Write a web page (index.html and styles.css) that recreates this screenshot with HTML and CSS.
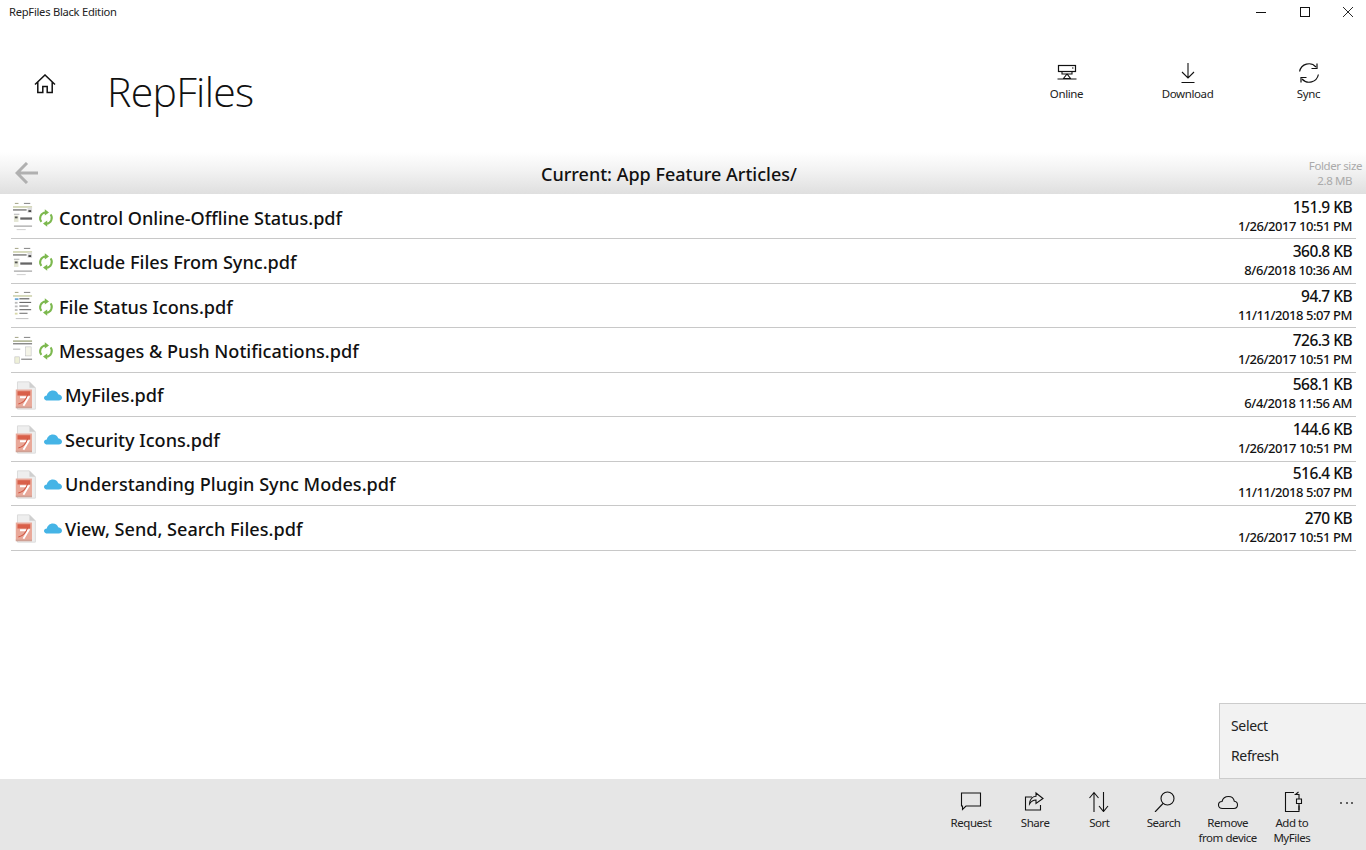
FILE: index.html
```html
<!DOCTYPE html>
<html lang="en">
<head>
<meta charset="utf-8">
<title>RepFiles Black Edition</title>
<link rel="stylesheet" href="styles.css">
</head>
<body>
<svg class="defs" width="0" height="0">
  <symbol id="doc" viewBox="0 0 24 32">
    <rect x="3" y="1" width="4" height="1" fill="#9a9a7a"/><rect x="13" y="1" width="7" height="1" fill="#777"/>
    <rect x="1" y="5" width="21" height="1" fill="#a8b070"/><rect x="1" y="8" width="15" height="1.5" fill="#777"/>
    <rect x="17" y="6" width="5" height="6" fill="#ddd"/><rect x="18" y="9" width="3" height="2" fill="#444"/>
    <rect x="2" y="13" width="6" height="1" fill="#aaa"/><rect x="2" y="15" width="5" height="7" fill="#e4e6d4"/><rect x="3" y="16" width="3" height="2" fill="#555"/>
    <rect x="9" y="17" width="13" height="2.5" fill="#666"/><rect x="2" y="26" width="20" height="1.2" fill="#999"/>
    <rect x="5" y="30" width="10" height="1" fill="#ccc"/>
  </symbol>
  <symbol id="doc-list" viewBox="0 0 24 32">
    <rect x="3" y="1" width="4" height="1" fill="#9a9a7a"/><rect x="13" y="1" width="7" height="1" fill="#777"/>
    <rect x="1" y="5" width="21" height="1" fill="#a8b070"/><rect x="3" y="8" width="4" height="2" fill="#6aa8d8"/>
    <rect x="8" y="8" width="11" height="1.2" fill="#555"/><rect x="3" y="12" width="3" height="2" fill="#bbb"/><rect x="8" y="12" width="13" height="1.2" fill="#666"/>
    <rect x="3" y="16" width="3" height="2" fill="#bbb"/><rect x="8" y="16" width="10" height="1.2" fill="#666"/>
    <rect x="3" y="20" width="3" height="2" fill="#bbb"/><rect x="8" y="20" width="13" height="1.2" fill="#666"/>
    <rect x="3" y="24" width="3" height="2" fill="#d8d8a8"/><rect x="8" y="24" width="9" height="1.2" fill="#777"/>
    <rect x="4" y="30" width="14" height="1" fill="#bbb"/>
  </symbol>
  <symbol id="doc-msg" viewBox="0 0 24 32">
    <rect x="3" y="1" width="4" height="1" fill="#9a9a7a"/><rect x="13" y="1" width="7" height="1" fill="#777"/>
    <rect x="1" y="5" width="21" height="1.2" fill="#889060"/><rect x="1" y="8" width="21" height="1.2" fill="#666"/>
    <rect x="1" y="14" width="8" height="1" fill="#aaa"/><rect x="15" y="12" width="6" height="10" fill="#f4f4e8" stroke="#bbb" stroke-width=".6"/>
    <rect x="3" y="23" width="5" height="7" fill="#eef0d8" stroke="#bbb" stroke-width=".6"/><rect x="10" y="25" width="12" height="1.2" fill="#777"/>
  </symbol>
  <symbol id="pdf" viewBox="0 0 26 34">
    <path d="M3 1h14l7 7v25H3z" fill="#eeeeee" stroke="#d8d8d8"/>
    <path d="M17 1v7h7z" fill="#cfcfcf"/>
    <rect x="1" y="10" width="19" height="21" fill="#e9a899"/>
    <rect x="3" y="12" width="15" height="5" fill="#d9604a"/>
    <path d="M6 19h10l-6 10" fill="none" stroke="#fff" stroke-width="2.2"/>
    <path d="M4 27c5-1 9-5 11-11" fill="none" stroke="#cf5440" stroke-width="1.3"/>
    <rect x="1" y="30" width="19" height="2" fill="#cfa094"/>
  </symbol>
  <symbol id="sync-green" viewBox="0 0 16 18">
    <path d="M3.400 12.800A5.800 5.800 0 0 1 7.600 3.400M12.600 5.400a5.800 5.800 0 0 1-4.200 9.300" fill="none" stroke="#7cb84e" stroke-width="2"/>
    <path d="M6.800.2l4.200 3.200-4.200 3.200zM9.200 11.400L5 14.600l4.200 3.200z" fill="#7cb84e"/>
  </symbol>
  <symbol id="cloud-blue" viewBox="0 0 18 11">
    <path d="M3.600 10.600C1.500 10.600 0 9.500 0 8c0-1.400 1.200-2.500 2.800-2.500C3.400 2.600 5.800.4 8.800.4c2.700 0 4.800 1.600 5.400 3.900 2.200.2 3.800 1.800 3.800 3.500 0 1.600-1.400 2.800-3.200 2.800z" fill="#45b4e6"/>
  </symbol>
</svg>

<div class="titlebar">
  <span class="app-name">RepFiles Black Edition</span>
  <div class="win-controls">
    <svg class="win-icon" viewBox="0 0 10 10"><path d="M0 5.500h10" stroke="#111" fill="none"/></svg>
    <svg class="win-icon" viewBox="0 0 10 10"><rect x=".5" y=".5" width="9" height="9" stroke="#111" fill="none"/></svg>
    <svg class="win-icon" viewBox="0 0 10 10"><path d="M0 0l10 10M10 0L0 10" stroke="#111" stroke-width=".9" fill="none"/></svg>
  </div>
</div>

<header class="header">
  <svg class="home" viewBox="0 0 22 20"><path d="M1 10.500L11 1l10 9.500M3.800 8v10.500h5v-6h4.400v6h5V8" fill="none" stroke="#111" stroke-width="1.500"/></svg>
  <h1 class="title">RepFiles</h1>
  <nav class="top-actions">
    <div class="top-btn">
      <svg class="top-icon" viewBox="0 0 22 20"><rect x="2.500" y="2.500" width="17" height="6" fill="none" stroke="#111" stroke-width="1.200"/><path d="M16 5h1.500" stroke="#111"/><path d="M6 8.500h10v2.500H6zM11 11l-3.500 4.500h7zM1.500 16h19" fill="none" stroke="#111" stroke-width="1.100"/></svg>
      <span>Online</span>
    </div>
    <div class="top-btn">
      <svg class="top-icon" viewBox="0 0 22 20"><path d="M11 0v15M5 9l6 6 6-6M4.500 19.500h13" fill="none" stroke="#111" stroke-width="1.100"/></svg>
      <span>Download</span>
    </div>
    <div class="top-btn">
      <svg class="top-icon" viewBox="0 0 22 20"><path d="M1.600 8.500A9.500 9.500 0 0 1 18 4M20.400 11.500A9.500 9.500 0 0 1 4 16" fill="none" stroke="#111" stroke-width="1.200"/><path d="M19 .5v5h-5.500M3 19.500v-5h5.500" fill="none" stroke="#111" stroke-width="1.200"/></svg>
      <span>Sync</span>
    </div>
  </nav>
</header>

<div class="pathbar">
  <svg class="back" viewBox="0 0 24 22"><path d="M23 11H2M12 1L2 11l10 10" fill="none" stroke="#b0b0b0" stroke-width="3"/></svg>
  <div class="path-name">Current: App Feature Articles/</div>
  <div class="folder-size"><div>Folder size</div><div class="folder-value">2.8 MB</div></div>
</div>

<main class="list">
  <div class="row"><svg class="thumb"><use href="#doc"/></svg><svg class="st-sync"><use href="#sync-green"/></svg><span class="name">Control Online-Offline Status.pdf</span><div class="meta"><div class="size">151.9 KB</div><div class="date">1/26/2017 10:51 PM</div></div></div>
  <div class="row"><svg class="thumb"><use href="#doc"/></svg><svg class="st-sync"><use href="#sync-green"/></svg><span class="name">Exclude Files From Sync.pdf</span><div class="meta"><div class="size">360.8 KB</div><div class="date">8/6/2018 10:36 AM</div></div></div>
  <div class="row"><svg class="thumb"><use href="#doc-list"/></svg><svg class="st-sync"><use href="#sync-green"/></svg><span class="name">File Status Icons.pdf</span><div class="meta"><div class="size">94.7 KB</div><div class="date">11/11/2018 5:07 PM</div></div></div>
  <div class="row"><svg class="thumb"><use href="#doc-msg"/></svg><svg class="st-sync"><use href="#sync-green"/></svg><span class="name">Messages &amp; Push Notifications.pdf</span><div class="meta"><div class="size">726.3 KB</div><div class="date">1/26/2017 10:51 PM</div></div></div>
  <div class="row"><svg class="thumb-pdf"><use href="#pdf"/></svg><svg class="st-cloud"><use href="#cloud-blue"/></svg><span class="name">MyFiles.pdf</span><div class="meta"><div class="size">568.1 KB</div><div class="date">6/4/2018 11:56 AM</div></div></div>
  <div class="row"><svg class="thumb-pdf"><use href="#pdf"/></svg><svg class="st-cloud"><use href="#cloud-blue"/></svg><span class="name">Security Icons.pdf</span><div class="meta"><div class="size">144.6 KB</div><div class="date">1/26/2017 10:51 PM</div></div></div>
  <div class="row"><svg class="thumb-pdf"><use href="#pdf"/></svg><svg class="st-cloud"><use href="#cloud-blue"/></svg><span class="name">Understanding Plugin Sync Modes.pdf</span><div class="meta"><div class="size">516.4 KB</div><div class="date">11/11/2018 5:07 PM</div></div></div>
  <div class="row"><svg class="thumb-pdf"><use href="#pdf"/></svg><svg class="st-cloud"><use href="#cloud-blue"/></svg><span class="name">View, Send, Search Files.pdf</span><div class="meta"><div class="size">270 KB</div><div class="date">1/26/2017 10:51 PM</div></div></div>
</main>

<div class="menu">
  <div class="menu-item">Select</div>
  <div class="menu-item">Refresh</div>
</div>

<footer class="appbar">
  <div class="bar-btn">
    <svg class="bar-icon" viewBox="0 0 24 22"><path d="M2.500 3h19v13H7l-3.500 3.500V16h-1z" fill="none" stroke="#111" stroke-width="1.100"/></svg>
    <span>Request</span>
  </div>
  <div class="bar-btn">
    <svg class="bar-icon" viewBox="0 0 24 22"><path d="M9 7H2.500v13h15v-5" fill="none" stroke="#111" stroke-width="1.100"/><path d="M13 3l7 5.500-7 5V10c-3.500 0-5 1.500-6.500 4C6.500 10 9 6.500 13 6.300z" fill="none" stroke="#111" stroke-width="1.100"/></svg>
    <span>Share</span>
  </div>
  <div class="bar-btn">
    <svg class="bar-icon" viewBox="0 0 24 22"><path d="M7 22V2.500M2.500 8L7 2.500 11.500 8M16.500 2v19.500M12 16l4.500 5.500L21 16" fill="none" stroke="#111" stroke-width="1.100"/></svg>
    <span>Sort</span>
  </div>
  <div class="bar-btn">
    <svg class="bar-icon" viewBox="0 0 24 22"><circle cx="15.500" cy="8.500" r="6.500" fill="none" stroke="#111" stroke-width="1.100"/><path d="M11 13.500L3 22" fill="none" stroke="#111" stroke-width="1.100"/></svg>
    <span>Search</span>
  </div>
  <div class="bar-btn">
    <svg class="bar-icon" viewBox="0 0 24 22"><path d="M6.500 18.500C4 18.500 2.500 17 2.500 15s1.500-3.500 3.500-3.500C6.800 8.500 9.500 6.500 12.500 6.500c3 0 5.300 2 5.800 4.700 2 .2 3.200 1.800 3.200 3.600 0 2-1.500 3.700-3.700 3.700z" fill="none" stroke="#111" stroke-width="1.100"/></svg>
    <span>Remove<br>from device</span>
  </div>
  <div class="bar-btn">
    <svg class="bar-icon" viewBox="0 0 24 22"><path d="M14 2.500H5.500v19h13.500v-6" fill="none" stroke="#111" stroke-width="1.100"/><path d="M18.500 2l-3 2.500h3.500V9M16 9h6M16.500 9v4.500h5V9M19 13.500V20" fill="none" stroke="#111" stroke-width="1.100"/></svg>
    <span>Add to<br>MyFiles</span>
  </div>
  <div class="bar-more"><i></i><i></i><i></i></div>
</footer>
</body>
</html>
```
FILE: styles.css
```css
* { box-sizing: border-box; }
html, body { margin: 0; height: 100%; }
body {
  width: 1366px;
  height: 850px;
  overflow: hidden;
  position: relative;
  display: flex;
  flex-direction: column;
  background: #fff;
  color: #000;
  font-family: "Noto Sans", "Open Sans", sans-serif;
}
.defs { position: absolute; }

.titlebar {
  height: 24px;
  display: flex;
  align-items: center;
  justify-content: space-between;
  flex: none;
}
.app-name { margin-left: 9px; padding-bottom: 2px; font-size: 11.2px; letter-spacing: -0.27px; color: #222; }
.win-controls { display: flex; gap: 33.5px; margin-right: 13px; }
.win-icon { width: 10px; height: 10px; display: block; }

.header {
  height: 128px;
  flex: none;
  display: flex;
  align-items: flex-start;
  position: relative;
}
.home { width: 22px; height: 20px; margin: 50px 0 0 34px; }
.title {
  margin: 36px 0 0 51px;
  font-family: "Open Sans", sans-serif;
  font-weight: 300;
  font-size: 41px;
  line-height: 62px;
  color: #111;
  letter-spacing: -0.7px;
}
.top-actions { margin-left: auto; display: flex; margin-right: -3px; margin-top: 39px; }
.top-btn {
  width: 121px;
  display: flex;
  flex-direction: column;
  align-items: center;
  font-size: 11.5px;
  letter-spacing: -0.38px;
  color: #222;
}
.top-icon { width: 22px; height: 20px; margin-bottom: 3px; }

.pathbar {
  height: 42px;
  flex: none;
  display: flex;
  align-items: center;
  position: relative;
  background: linear-gradient(#fff 0%, #f2f2f2 45%, #dfdfdf 100%);
}
.back { width: 24px; height: 22px; margin-left: 15px; }
.path-name {
  position: absolute;
  left: 541px;
  top: 10px;
  font-size: 18px;
  line-height: 24px;
  font-weight: 500;
  color: #111;
}
.folder-size {
  margin-left: auto;
  margin-right: 4px;
  font-size: 11.5px;
  line-height: 15px;
  letter-spacing: -0.4px;
  text-align: right;
  color: #aaa;
}
.folder-value { margin-right: 10px; }

.list { margin: 0 10px 0 11px; padding-top: 1px; flex: none; }
.row {
  height: 44.45px;
  display: flex;
  align-items: center;
  border-bottom: 1px solid #c8c8c8;
}
.thumb { width: 22px; height: 29px; margin: 0 4px 0 1px; flex: none; filter: blur(0.35px); }
.thumb-pdf { width: 24px; height: 29px; margin: 2px 6px 0 3px; flex: none; filter: blur(0.35px); }
.st-sync { width: 16px; height: 18px; margin: 2px 5px 0 0; flex: none; }
.st-cloud { width: 18px; height: 11px; margin: 2px 3px 0 0; flex: none; }
.name { font-size: 18.1px; padding-top: 2px; font-weight: 500; color: #111; }
.meta { margin-left: auto; margin-right: 4px; padding-bottom: 2px; text-align: right; }
.size { font-size: 15.5px; line-height: 20px; letter-spacing: -0.55px; font-weight: 500; color: #111; }
.date { font-size: 13px; line-height: 18px; letter-spacing: -0.44px; font-weight: 500; color: #111; }

.menu {
  position: absolute;
  right: 0;
  top: 703px;
  width: 147px;
  height: 76px;
  padding: 7px 11px;
  background: #f2f2f2;
  border: 1px solid #ccc;
  border-right: 0;
  font-size: 14px;
  letter-spacing: -0.35px;
  color: #222;
}
.menu-item { height: 30px; line-height: 30px; }

.appbar {
  position: absolute;
  left: 0;
  right: 0;
  bottom: 0;
  height: 71px;
  background: #e6e6e6;
  display: flex;
  justify-content: flex-end;
}
.bar-btn {
  width: 64.2px;
  padding-top: 11px;
  display: flex;
  flex-direction: column;
  align-items: center;
  text-align: center;
  font-size: 11.5px;
  line-height: 15px;
  letter-spacing: -0.45px;
  color: #222;
}
.bar-icon { width: 24px; height: 22px; margin-bottom: 3px; flex: none; }
.bar-more { width: 42px; padding: 23px 0 0 16px; display: flex; gap: 3.5px; align-items: flex-start; flex: none; }
.bar-more i { width: 2px; height: 2px; background: #333; border-radius: 50%; }
```
